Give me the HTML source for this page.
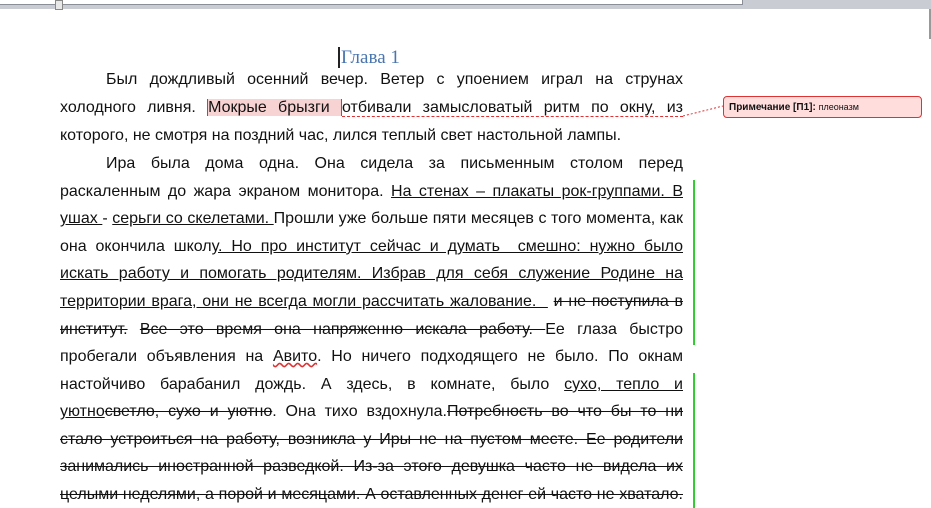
<!DOCTYPE html>
<html><head><meta charset="utf-8"><style>
body{margin:0;width:931px;height:508px;background:#fff;position:relative;overflow:hidden;font-family:"Liberation Sans",Arial,sans-serif;color:#111}
.l{position:absolute;left:60px;width:623px;font-size:16px;line-height:20px;text-align:justify;text-align-last:justify;white-space:nowrap}
.u{text-decoration:underline}
.s{text-decoration:line-through}
</style></head><body>
<div style="position:absolute;left:0;top:0;width:931px;height:9px;background:#c9ccd3"></div>
<div style="position:absolute;left:0;top:0;width:742px;height:4px;background:#fff;border-bottom:1px solid #8a8e96;border-right:1px solid #8a8e96"></div>
<div style="position:absolute;left:55px;top:0;width:6px;height:8px;background:#e8e8e8;border:1px solid #888"></div>
<div style="position:absolute;left:929px;top:9px;width:2px;height:30px;background:#999"></div>

<div style="position:absolute;left:338px;top:47px;font-family:'Liberation Serif',serif;font-size:19px;color:#4a76b0;border-left:2px solid #222;padding-left:1px;line-height:21px">Глава 1</div>

<div class="l" style="top:70px;left:106px;width:577px">Был дождливый осенний вечер. Ветер с упоением играл на струнах</div>
<div class="l" style="top:98px">холодного ливня. <span style="background:#f8d3d3;border-left:1px solid #d33;border-right:1px solid #d33">Мокрые брызги </span><span style="border-bottom:1px dashed #d33">отбивали замысловатый ритм по окну, из</span></div>
<div class="l" style="top:126px;text-align-last:left;width:auto">которого, не смотря на поздний час, лился теплый свет настольной лампы.</div>
<svg style="position:absolute;left:683px;top:100px" width="45" height="20"><path d="M0 16 L40 6" stroke="#d33" stroke-dasharray="2 2" fill="none"/></svg>
<div style="position:absolute;left:723px;top:96px;width:199px;height:22px;background:#fdd;border:1px solid #d33;border-radius:4px;font-size:10px;line-height:21px;padding-left:5px;box-sizing:border-box"><b>Примечание [П1]:</b> <span style="font-size:9px">плеоназм</span></div>

<div class="l" style="top:154px;left:106px;width:577px">Ира была дома одна. Она сидела за письменным столом перед</div>
<div class="l" style="top:182px">раскаленным до жара экраном монитора. <span class="u">На стенах – плакаты рок-группами. В</span></div>
<div class="l" style="top:209px"><span class="u">ушах </span>- <span class="u">серьги со скелетами. </span>Прошли уже больше пяти месяцев с того момента, как</div>
<div class="l" style="top:237px">она окончила школу<span class="u">. Но про институт сейчас и думать&nbsp; смешно: нужно было</span></div>
<div class="l u" style="top:264px">искать работу и помогать родителям. Избрав для себя служение Родине на</div>
<div class="l" style="top:292px"><span class="u">территории врага, они не всегда могли рассчитать жалование.&nbsp;&nbsp;</span> <span class="s">и не поступила в</span></div>
<div class="l" style="top:320px"><span class="s">институт.</span> <span class="s">Все это время она напряженно искала работу. </span>Ее глаза быстро</div>
<div class="l" style="top:347px">пробегали объявления на <span style="text-decoration:underline wavy #d33">Авито</span>. Но ничего подходящего не было. По окнам</div>
<div class="l" style="top:375px">настойчиво барабанил дождь. А здесь, в комнате, было <span class="u">сухо, тепло и</span></div>
<div class="l" style="top:402px"><span class="u">уютно</span><span class="s">светло, сухо и уютно</span>. Она тихо вздохнула.<span class="s">Потребность во что бы то ни</span></div>
<div class="l s" style="top:430px">стало устроиться на работу, возникла у Иры не на пустом месте. Ее родители</div>
<div class="l s" style="top:457px">занимались иностранной разведкой. Из-за этого девушка часто не видела их</div>
<div class="l s" style="top:485px">целыми неделями, а порой и месяцами. А оставленных денег ей часто не хватало.</div>

<div style="position:absolute;left:693px;top:180px;width:2px;height:165px;background:#3c3"></div>
<div style="position:absolute;left:693px;top:373px;width:2px;height:135px;background:#3c3"></div>
</body></html>
